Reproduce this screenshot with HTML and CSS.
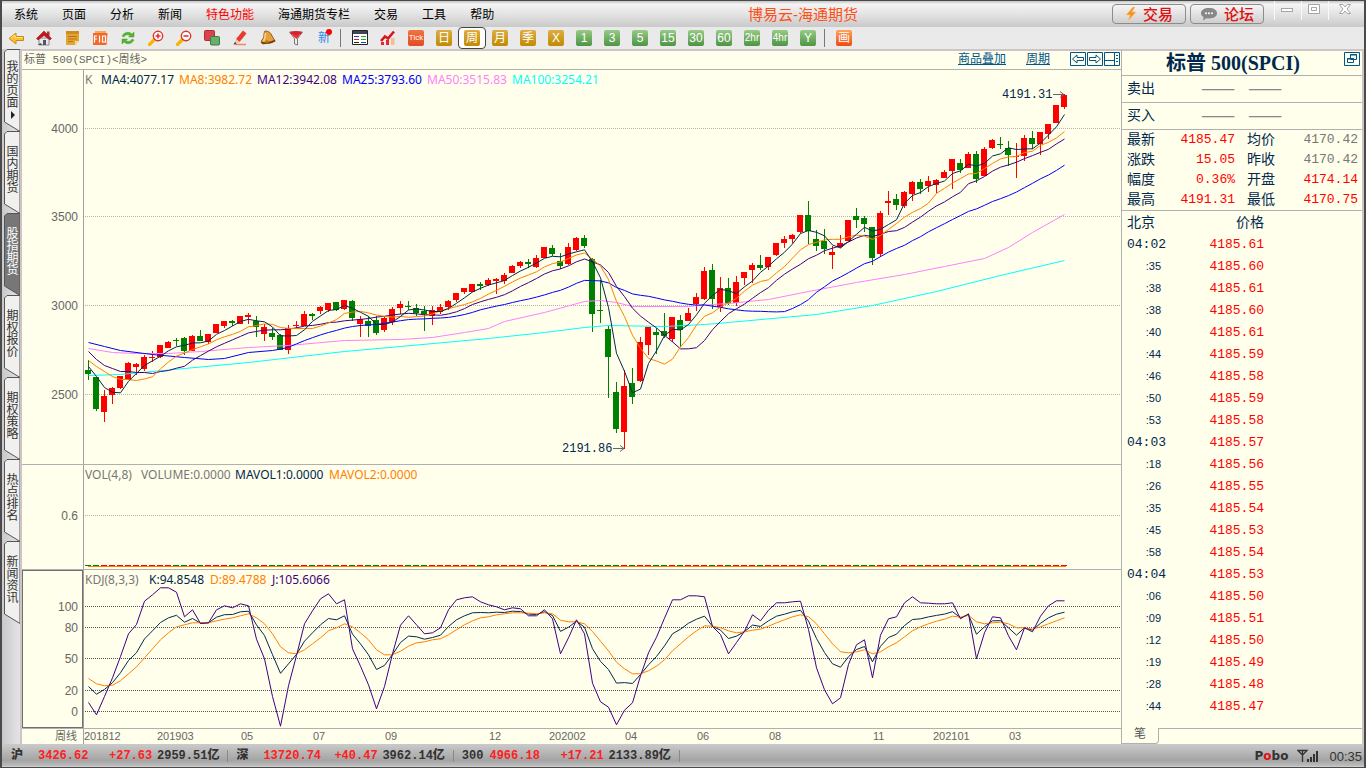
FILE: index.html
```html
<!DOCTYPE html>
<html lang="zh-CN">
<head>
<meta charset="utf-8">
<title>博易云-海通期货</title>
<link rel="stylesheet" href="styles.css">
</head>
<body>
<div class="window">
  <header class="titlebar">
    <nav class="menu">
      <a href="#">系统</a><a href="#">页面</a><a href="#">分析</a><a href="#">新闻</a><a href="#" class="hot">特色功能</a><a href="#">海通期货专栏</a><a href="#">交易</a><a href="#">工具</a><a href="#">帮助</a>
    </nav>
    <h1 class="app-title">博易云-海通期货</h1>
    <div class="title-actions">
      <button class="pill"><svg width="12" height="16" viewBox="0 0 12 16"><path d="M8 1 1 9h4l-2 6 8-9H7l3-5z" fill="#f7941d" stroke="#fbc98c" stroke-width=".5"/></svg>交易</button>
      <button class="pill"><svg width="18" height="14" viewBox="0 0 18 14"><path d="M9 1c5 0 8 2 8 5.300s-3 5.200-8 5.200c-1 0-1.500 0-2.500-.3L3 13.500l.6-3.400C2 9.200 1 8 1 6.300 1 3 4 1 9 1z" fill="#888"/><g fill="#fff"><circle cx="6" cy="6.300" r="1"/><circle cx="9" cy="6.300" r="1"/><circle cx="12" cy="6.300" r="1"/></g></svg>论坛</button>
    </div>
    <div class="win-controls">
      <button aria-label="最小化"><svg width="14" height="12" viewBox="0 0 14 12"><rect x="1.500" y="5.500" width="11" height="3" fill="#fff" stroke="#a5a5a5"/></svg></button>
      <button aria-label="最大化"><svg width="14" height="12" viewBox="0 0 14 12"><path d="M1.500 1.500h11v9h-11zM4.500 4.500h5v3h-5z" fill="#fff" stroke="#a5a5a5"/></svg></button>
      <button class="close" aria-label="关闭"><svg width="14" height="12" viewBox="0 0 14 12"><path d="M1.500 1.500h3.500l2 2.500 2-2.500h3.500L9 6l3.500 4.500H9L7 8l-2 2.500H1.500L5 6z" fill="#fff" stroke="#a5a5a5"/></svg></button>
    </div>
  </header>

  <div class="toolbar" role="toolbar">
    <button aria-label="返回"><svg viewBox="0 0 16 16"><path d="M1 8.500 8 3v3.500h7.500v4H8V14z" fill="#fbc02d" stroke="#c98a14"/><path d="M3 8 7 5v2.500h7.500" fill="none" stroke="#ffe680"/></svg></button>
    <button aria-label="首页"><svg viewBox="0 0 16 16"><path d="M3 8h10v7H3z" fill="#e8e8ea" stroke="#777" stroke-width=".8"/><path d="M11 1.500h2.500V6H11z" fill="#a33"/><path d="M.5 8.500 8 1l7.500 7.500-1.500 1.500L8 5.500 2 10z" fill="#c8151c" stroke="#8c1118" stroke-width=".5"/><path d="M7 10h3v5H7z" fill="#556"/><path d="M1.500 15h5l-2-2z" fill="#555"/></svg></button>
    <button aria-label="记事"><svg viewBox="0 0 16 16"><path d="M2 1h13v10l-4 4H2z" fill="#e3a531"/><path d="M2 1h13v3H2z" fill="#d08b20"/><path d="M4 6.500h9M4 9h9M4 11.500h5" stroke="#b5761a"/><path d="M11 15v-4h4z" fill="#f7d98c"/></svg></button>
    <button aria-label="F10"><svg viewBox="0 0 16 16"><path d="M3 1h11v3H3z" fill="#f7a94d"/><path d="M1 3h14.500l-1 12H1z" fill="#f0692a"/><path d="M2.500 5.500v7M2.500 6H5M2.500 9H5M7.500 5.500v7M10.500 6h3v6h-3z" fill="none" stroke="#fff" stroke-width="1.200"/></svg></button>
    <button aria-label="刷新"><svg viewBox="0 0 16 16"><path d="M2 6c2-4 7-5 10-2l2-2v5H8.500L10 5.500C8 4 5 4.500 4 7z" fill="#55b52b" stroke="#3a8f1c" stroke-width=".4"/><path d="M14 10c-2 4-7 5-10 2l-2 2V9h5.500L6 10.500c2 1.500 5 1 6-1.500z" fill="#55b52b" stroke="#3a8f1c" stroke-width=".4"/></svg></button>
    <button aria-label="放大"><svg viewBox="0 0 16 16"><path d="m1.500 14.500 5-5" stroke="#f7b500" stroke-width="3.200" stroke-linecap="round"/><circle cx="10" cy="6" r="4.700" fill="#fff" stroke="#e0342a" stroke-width="1.400"/><path d="M7.500 6h5M10 3.500v5" stroke="#e0342a" stroke-width="1.600"/></svg></button>
    <button aria-label="缩小"><svg viewBox="0 0 16 16"><path d="m1.500 14.500 5-5" stroke="#f7b500" stroke-width="3.200" stroke-linecap="round"/><circle cx="10" cy="6" r="4.700" fill="#fff" stroke="#e0342a" stroke-width="1.400"/><path d="M7.500 6h5" stroke="#e0342a" stroke-width="1.600"/></svg></button>
    <button aria-label="叠加"><svg viewBox="0 0 16 16"><rect x=".5" y=".5" width="10" height="10" rx="1" fill="#d9434b" stroke="#b52a33"/><rect x="6.500" y="6.500" width="9" height="8.500" rx="1" fill="#69ae6b" stroke="#3f7c42"/></svg></button>
    <button aria-label="画线"><svg viewBox="0 0 16 16"><path d="M4 9 11 .5 14.500 3.500 7.500 12z" fill="#e83b2e"/><path d="m4 9 3.500 3L2 14.500z" fill="#f5c39a"/><path d="M3 14.500h11" stroke="#f2836f" stroke-width="1.500"/><path d="m3 12-1.500 2.800L4.500 13.500z" fill="#333"/></svg></button>
    <button aria-label="预警"><svg viewBox="0 0 16 16"><path d="M5 1c4 0 6 2 7 5l3 5-12 3C1 13 1 11 2 10c3-3 1-6 3-9z" fill="#e5a23c" stroke="#995a14"/><path d="M5.500 3c-1 3 .5 5-2 8" fill="none" stroke="#f8d68c" stroke-width="1.500"/><path d="M1.500 12.500C5 14 11 13 15 10.500" fill="none" stroke="#6b3e0c" stroke-width="1.800"/><circle cx="7" cy="12" r="1.800" fill="#b06d1a"/></svg></button>
    <button aria-label="筛选"><svg viewBox="0 0 16 16"><path d="M1.500 2h13L9.500 8.500V15l-3-1V8.500z" fill="#eee" stroke="#777"/><ellipse cx="8" cy="3" rx="6" ry="2" fill="#d8222a"/><path d="M4 5h8L8.500 9z" fill="#e33"/></svg></button>
    <button class="new-btn" aria-label="新"><b>新</b><i class="dot"></i></button>
    <span class="sep"></span>
    <button aria-label="报价表"><svg viewBox="0 0 16 16"><path d="M.5.5h15v14H.5z" fill="#fff" stroke="#222"/><path d="M1 1h14v3H1z" fill="#445"/><path d="M2 6.500h5" stroke="#24a"/><path d="M2 9.500h5" stroke="#c22"/><path d="M2 12.500h5" stroke="#222"/><path d="M9 6.500h5M9 9.500h5" stroke="#2a2"/><path d="M9 12.500h5" stroke="#24a"/></svg></button>
    <button aria-label="走势"><svg viewBox="0 0 16 16"><path d="M1 12h3v3H1zM6 10h3v5H6z" fill="#e23"/><path d="M11 8h3.500v7H11z" fill="#f2c08a"/><path d="M1 11 5 6.500l3 2L14 1.500" fill="none" stroke="#d8151c" stroke-width="2.600"/></svg></button>
    <button aria-label="Tick"><span class="tile tick">Tick</span></button>
    <button aria-label="日线"><span class="tile gold">日</span></button>
    <button class="active" aria-label="周线"><span class="tile gold">周</span></button>
    <button aria-label="月线"><span class="tile gold">月</span></button>
    <button aria-label="季线"><span class="tile gold">季</span></button>
    <button aria-label="自定义"><span class="tile gold">X</span></button>
    <button><span class="tile green">1</span></button>
    <button><span class="tile green">3</span></button>
    <button><span class="tile green">5</span></button>
    <button><span class="tile green">15</span></button>
    <button><span class="tile green">30</span></button>
    <button><span class="tile green">60</span></button>
    <button><span class="tile green narrow">2hr</span></button>
    <button><span class="tile green narrow">4hr</span></button>
    <button><span class="tile green">Y</span></button>
    <span class="sep"></span>
    <button aria-label="画"><span class="tile draw">画</span></button>
  </div>

  <main class="main">
    <nav class="side-tabs">
      <button class="tab first"><svg class="tab-bg" viewBox="0 0 18 84"><path d="M18 .5H5L2.500 3v70L18 82.500z"/></svg><span>我的页面</span><i class="arrow"></i></button>
      <button class="tab"><svg class="tab-bg" viewBox="0 0 18 84"><path d="M18 .5H5L2.500 3v70L18 82.500z"/></svg><span>国内期货</span></button>
      <button class="tab on"><svg class="tab-bg" viewBox="0 0 18 84"><path d="M18 .5H5L2.500 3v70L18 82.500z"/></svg><span>股指期货</span></button>
      <button class="tab"><svg class="tab-bg" viewBox="0 0 18 84"><path d="M18 .5H5L2.500 3v70L18 82.500z"/></svg><span>期权报价</span></button>
      <button class="tab"><svg class="tab-bg" viewBox="0 0 18 84"><path d="M18 .5H5L2.500 3v70L18 82.500z"/></svg><span>期权策略</span></button>
      <button class="tab"><svg class="tab-bg" viewBox="0 0 18 84"><path d="M18 .5H5L2.500 3v70L18 82.500z"/></svg><span>热点排名</span></button>
      <button class="tab"><svg class="tab-bg" viewBox="0 0 18 84"><path d="M18 .5H5L2.500 3v70L18 82.500z"/></svg><span>新闻资讯</span></button>
    </nav>

    <section class="charts">
      <div class="chart-head">
        <span>标普 500(SPCI)&lt;周线&gt;</span>
        <div class="chart-links">
          <a href="#">商品叠加</a><a href="#">周期</a>
          <div class="nav-icons">
            <button aria-label="上一个"><svg width="16" height="14" viewBox="0 0 16 14"><path d="M.5.5h15v13H.5z"/><path d="M2.500 7 7 3v2.500h6.500v3H7V11z"/></svg></button>
            <button aria-label="下一个"><svg width="16" height="14" viewBox="0 0 16 14"><path d="M.5.5h15v13H.5z"/><path d="M13.500 7 9 3v2.500H2.500v3H9V11z"/></svg></button>
            <button aria-label="布局"><svg width="16" height="14" viewBox="0 0 16 14"><path d="M.5.5h15v13H.5zM.5 8.500h10M10.500.5v13M12 3.500h2M12 6.500h2M12 9.500h2"/></svg></button>
          </div>
        </div>
      </div>
      <svg class="panel price" id="price">
        <g class="axis-text">
          <text x="56" y="63">4000</text><text x="56" y="151">3500</text><text x="56" y="240">3000</text><text x="56" y="329">2500</text>
        </g>
        <g class="grid">
          <line x1="63" x2="100%" y1="58.500" y2="58.500"/><line x1="63" x2="100%" y1="146.500" y2="146.500"/><line x1="63" x2="100%" y1="235.500" y2="235.500"/><line x1="63" x2="100%" y1="324.500" y2="324.500"/>
        </g>
        <line class="rule" x1="61.500" x2="61.500" y1="0" y2="100%"/>
        <text class="legend" y="14"><tspan x="63" class="c-gray">K</tspan><tspan x="79" class="c-navy">MA4:4077.17</tspan><tspan x="157" class="c-orange">MA8:3982.72</tspan><tspan x="235" class="c-purple">MA12:3942.08</tspan><tspan x="320" class="c-blue">MA25:3793.60</tspan><tspan x="405" class="c-pink">MA50:3515.83</tspan><tspan x="490" class="c-cyan">MA100:3254.21</tspan></text>
      </svg>
      <svg class="panel volume" id="volume">
        <g class="axis-text"><text x="56" y="55">0.6</text></g>
        <g class="grid"><line x1="63" x2="100%" y1="50.500" y2="50.500"/></g>
        <line class="rule" x1="61.500" x2="61.500" y1="0" y2="100%"/>
        <text class="legend" y="14"><tspan x="63" class="c-gray">VOL(4,8)</tspan><tspan x="119" class="c-gray">VOLUME:0.0000</tspan><tspan x="213" class="c-navy">MAVOL1:0.0000</tspan><tspan x="307" class="c-orange">MAVOL2:0.0000</tspan></text>
      </svg>
      <svg class="panel kdj" id="kdj">
        <rect x=".5" y=".5" width="60" height="157" fill="none" stroke="#707070"/>
        <g class="axis-text">
          <text x="56" y="41">100</text><text x="56" y="62">80</text><text x="56" y="93">50</text><text x="56" y="125">20</text><text x="56" y="146">0</text>
        </g>
        <g class="grid dark">
          <line x1="63" x2="100%" y1="36.500" y2="36.500"/><line x1="63" x2="100%" y1="57.500" y2="57.500"/><line x1="63" x2="100%" y1="88.500" y2="88.500"/><line x1="63" x2="100%" y1="120.500" y2="120.500"/><line x1="63" x2="100%" y1="141.500" y2="141.500"/>
        </g>
        <line class="rule" x1="61.500" x2="61.500" y1="0" y2="100%"/>
        <text class="legend" y="14"><tspan x="63" class="c-gray">KDJ(8,3,3)</tspan><tspan x="127" class="c-navy">K:94.8548</tspan><tspan x="188" class="c-orange">D:89.4788</tspan><tspan x="250" class="c-purple">J:105.6066</tspan></text>
      </svg>
      <svg class="panel dates">
        <line class="rule" x1="61.500" x2="61.500" y1="0" y2="100%"/>
        <text x="33" y="11">周线</text><text x="62" y="11">201812</text><text x="135" y="11">201903</text><text x="219" y="11">05</text><text x="291" y="11">07</text><text x="363" y="11">09</text><text x="467" y="11">12</text><text x="527" y="11">202002</text><text x="603" y="11">04</text><text x="675" y="11">06</text><text x="747" y="11">08</text><text x="851" y="11">11</text><text x="911" y="11">202101</text><text x="987" y="11">03</text>
      </svg>
    </section>

    <aside class="quote">
      <div class="quote-head">
        <h2>标普 500(SPCI)</h2>
        <button aria-label="切换窗口"><svg width="16" height="14" viewBox="0 0 16 14"><path d="M.5.5h15v13H.5z"/><path d="M6.500 2.500h6v5h-6zM3.500 6.500h6v4h-6z" fill="#ffffeb"/><path d="M6 3h7M3 7h7"/></svg></button>
      </div>
      <dl class="book"><dt>卖出</dt><dd>———</dd><dd>———</dd></dl>
      <dl class="book"><dt>买入</dt><dd>———</dd><dd>———</dd></dl>
      <table class="stats">
        <tr><th>最新</th><td class="up">4185.47</td><th>均价</th><td class="flat">4170.42</td></tr>
        <tr><th>涨跌</th><td class="up">15.05</td><th>昨收</th><td class="flat">4170.42</td></tr>
        <tr><th>幅度</th><td class="up">0.36%</td><th>开盘</th><td class="up">4174.14</td></tr>
        <tr><th>最高</th><td class="up">4191.31</td><th>最低</th><td class="up">4170.75</td></tr>
      </table>
      <table class="ticks">
        <thead><tr><th>北京</th><th class="p">价格</th><th></th></tr></thead>
        <tbody>
          <tr><td class="m">04:02</td><td>4185.61</td></tr>
          <tr><td class="s">:35</td><td>4185.60</td></tr>
          <tr><td class="s">:38</td><td>4185.61</td></tr>
          <tr><td class="s">:38</td><td>4185.60</td></tr>
          <tr><td class="s">:40</td><td>4185.61</td></tr>
          <tr><td class="s">:44</td><td>4185.59</td></tr>
          <tr><td class="s">:46</td><td>4185.58</td></tr>
          <tr><td class="s">:50</td><td>4185.59</td></tr>
          <tr><td class="s">:53</td><td>4185.58</td></tr>
          <tr><td class="m">04:03</td><td>4185.57</td></tr>
          <tr><td class="s">:18</td><td>4185.56</td></tr>
          <tr><td class="s">:26</td><td>4185.55</td></tr>
          <tr><td class="s">:35</td><td>4185.54</td></tr>
          <tr><td class="s">:45</td><td>4185.53</td></tr>
          <tr><td class="s">:58</td><td>4185.54</td></tr>
          <tr><td class="m">04:04</td><td>4185.53</td></tr>
          <tr><td class="s">:06</td><td>4185.50</td></tr>
          <tr><td class="s">:09</td><td>4185.51</td></tr>
          <tr><td class="s">:12</td><td>4185.50</td></tr>
          <tr><td class="s">:19</td><td>4185.49</td></tr>
          <tr><td class="s">:28</td><td>4185.48</td></tr>
          <tr><td class="s">:44</td><td>4185.47</td></tr>
        </tbody>
      </table>
      <div class="quote-tabs"><button>笔</button><span></span></div>
    </aside>
  </main>

  <footer class="status">
    <div class="index"><b class="name">沪</b><b class="up last">3426.62</b><b class="up chg">+27.63</b><b>2959.51亿</b></div>
    <div class="index"><b class="name">深</b><b class="up last">13720.74</b><b class="up chg">+40.47</b><b>3962.14亿</b></div>
    <div class="index"><b class="name">300</b><b class="up last">4966.18</b><b class="up chg">+17.21</b><b>2133.89亿</b></div>
    <div class="system">
      <span class="brand">P<em>o</em>bo</span>
      <svg width="23" height="14" viewBox="0 0 23 14"><path d="M1 1.500h9L5.500 6zM5.500 2v11" fill="none" stroke="#333" stroke-width="1.300"/><path d="M10 10h2v3h-2zM13 8h2v5h-2zM16 5h2v8h-2zM19 2h2v11h-2z" fill="#333"/></svg>
      <time>00:35</time>
    </div>
  </footer>
</div>
<script src="chart.js"></script>
</body>
</html>
```
FILE: styles.css
```css
* { box-sizing: border-box; }
body {
  margin: 0;
  font: 12px/16px "Liberation Sans", "Noto Sans CJK SC", sans-serif;
  color: #000;
}
button { margin: 0; padding: 0; border: 0; background: none; font: inherit; color: inherit; }
h1, h2, dl, dd { margin: 0; font-weight: normal; }
.window {
  display: flex;
  flex-direction: column;
  height: 100vh;
  border: 1px solid #4a4a4a;
  border-left-width: 2px;
  border-right-width: 2px;
  background: #eaeaea;
}
.titlebar {
  display: flex;
  height: 26px;
  background: linear-gradient(#c4c4c4, #f4f4f4 12%, #e6e6e6 45%, #c9c9c9);
}
.menu { display: flex; gap: 24px; padding: 6px 0 0 12px; }
.menu a { color: #000; text-decoration: none; }
.menu a.hot { color: #f00; }
.app-title { margin: 0 auto; font: 15px/28px "Liberation Sans", "Noto Sans CJK SC", sans-serif; color: #ff4e16; }
.title-actions { display: flex; gap: 4px; padding-top: 3px; }
.pill {
  display: flex;
  align-items: center;
  justify-content: center;
  gap: 6px;
  width: 74px;
  height: 20px;
  border: 1px solid #8c8c8c;
  border-radius: 4px;
  background: linear-gradient(#f6f6f6, #cfcfcf);
  font: 500 15px/18px "Noto Sans CJK SC", sans-serif;
  color: #e01010;
}
.win-controls { display: flex; gap: 1px; margin: 0 2px 0 10px; height: 19px; }
.win-controls button { width: 26px; border-left: 1px solid #f8f8f8; }
.win-controls .close { width: 34px; }

.toolbar { display: flex; align-items: center; height: 22px; }
.toolbar button { display: grid; place-items: center; width: 28px; height: 22px; }
.toolbar button svg { width: 16px; height: 16px; }
.toolbar button.active { border: 1px solid #444; border-radius: 4px; background: #fff; }
.sep { width: 1px; height: 18px; margin: 0 5px 0 2px; background: #777; }
.toolbar .new-btn { position: relative; color: #2f8be6; }
.new-btn b { font-weight: normal; }
.dot { position: absolute; top: 2px; right: 6px; width: 6px; height: 6px; border-radius: 3px; background: #f00; }
.tile {
  display: block;
  width: 16px;
  height: 16px;
  border-radius: 2px;
  font: 12px/16px "Liberation Sans", "Noto Sans CJK SC", sans-serif;
  text-align: center;
  color: #fff;
  overflow: hidden;
}
.gold { background: linear-gradient(#dcae42, #c38a00); }
.green { background: linear-gradient(#97cb85, #4f9444); }
.tick { background: linear-gradient(#f0753f, #e44a20); font-size: 8px; }
.draw { background: linear-gradient(#ffa45c, #ee4a12); }
.narrow { font-size: 10px; }

.main { display: flex; flex: 1; min-height: 0; }
.side-tabs { display: flex; flex-direction: column; width: 18px; background: linear-gradient(90deg, #c9c9cc, #e4e4e6); }
.tab { position: relative; display: flex; flex-direction: column; height: 82px; padding: 14px 0 0 3px; color: #333; text-align: left; }
.tab span { position: relative; width: 14px; height: 48px; font: 12px/14px "Noto Sans CJK SC", sans-serif; writing-mode: vertical-rl; }
.tab-bg { position: absolute; left: 0; top: 0; width: 18px; height: 84px; fill: #f0f0ee; stroke: #555; }
.tab.on { color: #fff; }
.tab.on .tab-bg { fill: #777; }
.tab.first { padding-top: 11px; }
.arrow { position: relative; margin: 3px 0 0 6px; border: 4px solid transparent; border-left: 4px solid #222; width: 0; height: 0; }

.charts {
  display: flex;
  flex-direction: column;
  flex: 1;
  min-width: 0;
  border: 2px solid #cdc5c5;
  border-right: 0;
  border-bottom: 0;
  background: #ffffeb;
}
.chart-head {
  display: flex;
  justify-content: space-between;
  height: 19px;
  padding-left: 2px;
  border-bottom: 1px solid #b0b0b0;
  font: 11px/18px "Liberation Mono", "Noto Sans CJK SC", monospace;
  color: #666;
}
.chart-links { display: flex; gap: 20px; }
.chart-links a { color: #00568c; font-size: 12px; }
.nav-icons { display: flex; gap: 1px; padding: 1px 1px 0 0; }
.nav-icons button { height: 14px; display: block; line-height: 0; }
.nav-icons path, .quote-head path { fill: none; stroke: #00568c; }
.panel { display: block; width: 100%; border-bottom: 1px solid #b0b0b0; overflow: hidden; }
.price { flex: 1; min-height: 0; }
.volume { height: 105px; }
.kdj { height: 159px; }
.dates { height: 15px; border-bottom: 0; fill: #666; font-size: 11px; }
.axis-text { fill: #666; font: 12px "Liberation Sans", sans-serif; text-anchor: end; }
.grid line { stroke: #b4b4b4; stroke-dasharray: 1 1; }
.grid.dark line { stroke: #555; }
.rule { stroke: #a0a0a0; }
.legend { font: 12px "Noto Sans", sans-serif; }
.mark { font: 12px "Liberation Mono", monospace; fill: #002850; }
.up-bar { fill: #f00; }
.down-bar { fill: #008000; }
.curve { fill: none; stroke-width: 1; }
.c-gray { fill: #777; }
.c-navy { fill: #002850; }
.c-orange { fill: #ff8000; }
.c-purple { fill: #400080; }
.c-blue { fill: #00f; }
.c-pink { fill: #ff80ff; }
.c-cyan { fill: #0ff; }

.quote {
  display: flex;
  flex-direction: column;
  width: 243px;
  border: 1px solid #b0b0b0;
  border-top: 2px solid #cdc5c5;
  border-right: 2px solid #cdc5c5;
  border-bottom: 0;
  background: #ffffeb;
  color: #002850;
  font: 14px/20px "Liberation Mono", "Noto Sans CJK SC", monospace;
}
.quote-head { display: flex; height: 25px; border-bottom: 1px solid #b0b0b0; }
.quote-head h2 { flex: 1; font: bold 20px/24px "Liberation Serif", "Noto Sans CJK SC", serif; text-align: center; }
.quote-head button { height: 14px; margin: 1px 2px 0 0; line-height: 0; }
.book { display: flex; height: 27px; padding-left: 5px; border-bottom: 1px solid #b0b0b0; line-height: 26px; }
.book dt { width: 75px; }
.book dd { width: 47px; font-size: 18px; color: #888; }
table { border-collapse: collapse; table-layout: fixed; width: 100%; }
th, td { padding: 0; font-weight: normal; text-align: left; white-space: nowrap; }
.stats { border-bottom: 1px solid #b0b0b0; }
.stats tr { height: 20px; }
.stats th { width: 42px; padding: 1px 0 0 5px; line-height: 19px; }
.stats td { font-size: 13px; text-align: right; padding-right: 4px; }
.stats td:nth-child(2) { padding-right: 7px; }
.up { color: #f00; }
.flat { color: #777; }
.ticks tr { height: 22px; }
.ticks thead tr { height: 23px; }
.ticks th:first-child { width: 60px; padding-left: 5px; }
.ticks th.p { width: 82px; text-align: right; }
.ticks td { color: #f00; font-size: 13px; text-align: right; }
.ticks td.m { color: #002850; text-align: left; padding-left: 5px; }
.ticks td.s { color: #002850; font: 11px/20px "Liberation Sans", sans-serif; padding: 0 21px 2px 0; }
.quote-tabs { display: flex; margin-top: auto; height: 16px; }
.quote-tabs button { width: 37px; border: 1px solid #b0b0b0; border-top: 0; border-left: 0; border-bottom-right-radius: 4px; font-size: 12px; line-height: 15px; color: #555; }
.quote-tabs span { flex: 1; border-top: 1px solid #b0b0b0; background: #ffffeb; }

.status {
  display: flex;
  height: 23px;
  padding-left: 9px;
  background: linear-gradient(#cacaca, #a4a4a4 75%, #bdbdbd);
  border-bottom: 1px solid #ccc;
  font: bold 12px/25px "Liberation Mono", "Noto Sans CJK SC", monospace;
  color: #333;
}
.status .up { color: #ff2020; }
.index { display: flex; }
.index::after { content: ""; width: 1px; height: 12px; margin: 6px 8px 0 8px; background: #888; }
.name { min-width: 21px; margin-right: 6px; }
.last { width: 71px; }
.chg { width: 48px; }
.system { display: flex; align-items: center; gap: 9px; margin-left: auto; padding: 2px 2px 0 0; }
.brand { font: bold 12px "DejaVu Sans", sans-serif; }
.brand em { font-style: normal; color: #e01010; }
.system time { font: 13px "Liberation Sans", sans-serif; }
```
FILE: chart.js
```js
// Weekly bars, one per 8px step: [direction, high, body top, body bottom, low] in window rows.
const bars = `
d360 370 374 380|d377 377 409 411|u390 396 412 422|u387 388 395 404|u376 376 388 389|u362 363 380 380|u363 364 367 375|u355 357 369 371
u351 357 358 362|u345 345 357 358|u341 342 348 348|d338 340 341 346|d337 338 351 355|u335 336 351 351|d330 336 341 341|u334 334 342 344
u324 324 333 333|u321 321 326 328|d320 321 323 326|u316 316 324 324|u313 315 317 324|d316 321 327 337|u324 327 334 341|d328 333 337 340
d334 335 350 350|u325 328 350 354|u321 325 326 328|u311 314 326 326|d313 314 316 320|u306 307 311 314|u303 303 310 312|d302 302 310 311
u300 300 309 310|d300 301 318 321|u316 319 324 337|d316 321 326 337|d316 320 333 335|u316 318 330 332|u307 309 322 325|u301 304 308 314
d301 306 307 310|d304 308 313 316|d306 311 314 331|u306 310 316 325|u304 307 312 314|u300 301 307 310|u293 293 300 302|u288 288 292 294
u284 284 292 292|d282 284 286 290|u278 280 285 286|u278 279 281 294|u273 275 281 284|u265 266 273 273|u261 262 266 268|d259 262 264 268
u255 258 267 268|u247 247 258 258|d245 248 254 256|d253 261 266 269|u243 247 264 265|u237 238 250 251|d235 238 246 248|d258 259 314 332
d280 310 311 323|d326 329 357 398|d382 392 429 433|u370 386 432 449|d368 383 397 404|u337 342 381 382|u327 327 345 355|d328 332 335 354
d313 331 336 338|u317 317 339 342|d315 320 330 347|u308 313 321 321|u293 297 304 311|u267 271 299 300|d264 270 299 309|u277 288 307 312
d278 288 303 305|u276 282 303 306|u272 272 278 285|u263 265 270 283|d255 265 268 270|u257 257 267 270|u243 243 255 256|u236 239 243 248
u234 235 239 243|u215 215 232 233|d201 215 231 244|d230 239 246 251|d229 241 249 254|u246 252 255 269|u235 243 247 248|u220 220 241 241
d208 216 220 228|d216 218 224 232|d227 227 258 265|u211 213 254 257|u191 201 203 215|d194 199 205 210|u191 192 206 208|u181 182 194 201
d179 182 189 194|u176 181 186 192|u179 180 185 193|u170 172 178 178|u159 159 171 189|d159 163 170 173|u152 154 168 168|d151 154 179 183
u147 149 176 176|u139 140 148 149|d137 144 145 149|d141 148 155 166|u143 156 157 178|u135 138 156 161|d131 138 144 149|u132 132 144 155
u124 124 134 139|u105 105 123 123|u94 95 107 109`
  .trim().split(/[|\n]/).map(s => ({ up: s[0] === "u", v: s.slice(1).split(" ").map(Number) }));

// Oscillator rows, three units per pixel.
const jRows = [426,463,408,352,288,220,192,122,103,82,82,95,169,148,189,187,148,136,142,130,136,236,295,408,497,376,285,190,151,115,100,130,118,265,317,373,445,378,280,
  194,166,193,220,217,202,148,118,112,109,124,133,139,148,142,145,166,166,148,175,280,232,178,220,368,424,440,493,449,427,346,277,230,173,118,118,106,106,109,198,222,280,246,212,163,181,149,127,127,124,122,
  207,322,388,430,412,312,253,238,352,224,175,169,127,109,127,128,130,130,127,175,160,295,217,169,172,226,268,202,214,167,136,121,121];
const dRows = [354,370,376,374,361,340,319,292,265,238,217,199,193,187,187,187,181,176,172,166,160,172,190,220,259,277,280,268,250,232,211,202,190,199,217,238,268,283,283,
  272,257,247,244,238,235,223,208,193,181,172,169,163,160,157,157,158,160,157,160,179,184,184,190,213,242,271,305,325,340,340,331,317,298,271,250,229,211,196,197,202,211,217,214,209,206,197,187,178,169,163,
  169,190,220,250,274,277,274,268,280,274,259,247,229,211,199,190,182,176,167,170,164,184,190,187,185,190,202,202,206,199,190,181,172];
const kRows = jRows.map((j, i) => (j + 2 * dRows[i]) / 3);

const STEP = 8, FIRST = 66, PRICE_TOP = 70;
const add = (id, name, attrs, text) => {
  const el = document.createElementNS("http://www.w3.org/2000/svg", name);
  for (const k in attrs) el.setAttribute(k, attrs[k]);
  if (text) el.textContent = text;
  document.getElementById(id).appendChild(el);
};
const curve = (id, color, pts) =>
  add(id, "polyline", { class: "curve", stroke: color, points: pts.map(([i, y]) => `${FIRST + STEP * i + 0.5},${(y + 0.5).toFixed(1)}`).join(" ") });

bars.forEach(({ up, v: [hi, top, bottom, lo] }, i) => {
  const x = FIRST + STEP * i, cls = up ? "up-bar" : "down-bar";
  add("price", "rect", { class: cls, x, y: hi - PRICE_TOP, width: 1, height: Math.max(lo - hi, 1) });
  add("price", "rect", { class: cls, x: x - 3, y: top - PRICE_TOP, width: 6, height: Math.max(bottom - top, 1) });
  add("volume", "rect", { class: cls, x: x - 3, y: 100, width: 6, height: 1 });
});
add("volume", "rect", { class: "c-orange", x: FIRST, y: 101, width: STEP * 122 + 2, height: 1 });

const closes = bars.map(b => (b.up ? b.v[1] : b.v[2]) - PRICE_TOP);
const average = (n, lead) => {
  const pts = lead.map(([i, y]) => [i, y - PRICE_TOP]);
  for (let i = n - 1; i < closes.length; i++)
    pts.push([i, closes.slice(i - n + 1, i + 1).reduce((a, b) => a + b) / n]);
  return pts;
};
const list = ys => ys.map((y, i) => [i, y]);
const plain = pts => pts.map(([i, y]) => [i, y - PRICE_TOP]);

curve("price", "#00ffff", plain([[0,375],[4,374],[12,368],[20,362],[32,351],[39,346],[50,338],[57,332],[62,327],[65,325],[72,326],[77,324],[80,322],[91,314],[98,305],[106,291],[114,275],[122,260]]));
curve("price", "#ff80ff", plain([[0,348],[3,352],[6,353],[10,353],[14,351],[20,347],[25,345],[32,340],[39,339],[43,337],[47,332],[50,328],[52,321],[57,312],[62,301],[64,300],[66,302],[68,306],[75,306],[78,304],[80,303],[85,299],[90,291],[96,282],[102,274],[107,266],[112,258],[115,247],[118,232],[122,214]]));
curve("price", "#0000ff", average(25, [[0,342],[2,346],[4,350],[8,354],[12,357],[15,359],[17,358],[20,352],[23,350]]));
curve("price", "#400080", average(12, list([351,359,365,368,371,371,372,372,373,371,370])));
curve("price", "#ff8000", average(8, list([360,366,371,376,379,379,380])));
curve("price", "#002850", average(4, list([366,376,387])));

add("price", "text", { class: "mark", x: 980, y: 28 }, "4191.31");
add("price", "text", { class: "mark", x: 540, y: 382 }, "2191.86");
add("price", "path", { d: "M1031 24.5h11M1038 21.500l4 3-4 3M591 378.500h11M598 375.500l4 3-4 3", fill: "none", stroke: "#666" });

[["#002850", kRows], ["#ff8000", dRows], ["#400080", jRows]].forEach(([color, rows]) =>
  curve("kdj", color, rows.map((r, i) => [i, r / 3 - 10])));
```
